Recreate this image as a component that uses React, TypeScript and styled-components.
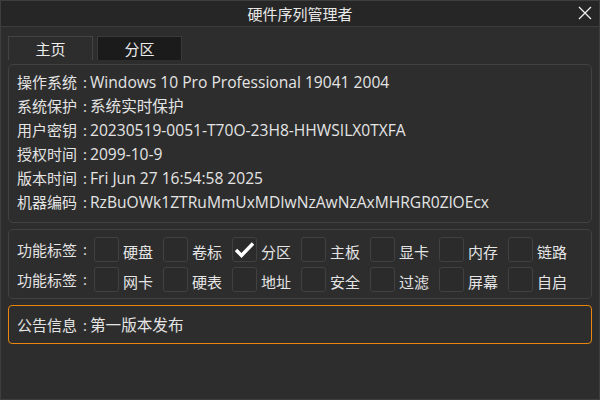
import styled, { createGlobalStyle } from 'styled-components'
import type { ReactElement } from 'react'

const GlobalStyle = createGlobalStyle`
  html, body {
    margin: 0;
    padding: 0;
    background: #2d2d2d;
  }
  body {
    font-family: "Open Sans", "Noto Sans CJK SC", sans-serif;
    color: #e4e4e4;
  }
`

type InfoRow = { label: string; value: string }

const INFO_ROWS: InfoRow[] = [
  { label: '操作系统', value: 'Windows 10 Pro Professional 19041 2004' },
  { label: '系统保护', value: '系统实时保护' },
  { label: '用户密钥', value: '20230519-0051-T70O-23H8-HHWSILX0TXFA' },
  { label: '授权时间', value: '2099-10-9' },
  { label: '版本时间', value: 'Fri Jun 27 16:54:58 2025' },
  { label: '机器编码', value: 'RzBuOWk1ZTRuMmUxMDIwNzAwNzAxMHRGR0ZlOEcx' },
]

type Feature = { name: string; checked?: boolean }

const FEATURE_ROWS: Feature[][] = [
  [
    { name: '硬盘' },
    { name: '卷标' },
    { name: '分区', checked: true },
    { name: '主板' },
    { name: '显卡' },
    { name: '内存' },
    { name: '链路' },
  ],
  [
    { name: '网卡' },
    { name: '硬表' },
    { name: '地址' },
    { name: '安全' },
    { name: '过滤' },
    { name: '屏幕' },
    { name: '自启' },
  ],
]

const App = (): ReactElement => {
  return (
    <>
      <GlobalStyle />
      <Window>
        <TitleBar>
          <Title>硬件序列管理者</Title>
          <CloseButton aria-label="close">
            <svg width="14" height="14" viewBox="0 0 14 14">
              <path d="M1 1 L13 13 M13 1 L1 13" stroke="#f0f0f0" strokeWidth="1.3" />
            </svg>
          </CloseButton>
        </TitleBar>
        <Body>
          <Tabs>
            <Tab>主页</Tab>
            <Tab active>分区</Tab>
          </Tabs>
          <InfoPanel>
            {INFO_ROWS.map(row => (
              <InfoLine key={row.label}>
                <Label>{row.label}</Label>
                <Colon>:</Colon>
                <Value>{row.value}</Value>
              </InfoLine>
            ))}
          </InfoPanel>
          <FeaturePanel>
            {FEATURE_ROWS.map((row, i) => (
              <FeatureLine key={i}>
                <FeatureLabel>
                  <Label>功能标签</Label>
                  <Colon>:</Colon>
                </FeatureLabel>
                {row.map(f => (
                  <FeatureItem key={f.name}>
                    <CheckBox>
                      {f.checked ? (
                        <svg width="21" height="17" viewBox="0 0 21 17">
                          <path
                            d="M2 9 L7.5 14.5 L19 2.5"
                            fill="none"
                            stroke="#ffffff"
                            strokeWidth="3.4"
                          />
                        </svg>
                      ) : null}
                    </CheckBox>
                    <FeatureName>{f.name}</FeatureName>
                  </FeatureItem>
                ))}
              </FeatureLine>
            ))}
          </FeaturePanel>
          <NoticePanel>
            <Label>公告信息</Label>
            <Colon>:</Colon>
            <Value>第一版本发布</Value>
          </NoticePanel>
        </Body>
      </Window>
    </>
  )
}

export default App

const Window = styled.div`
  width: 600px;
  height: 400px;
  box-sizing: border-box;
  border: 1px solid #3e3e3e;
  background: #2d2d2d;
  display: flex;
  flex-direction: column;
  font-size: 15px;
`

const TitleBar = styled.div`
  height: 25px;
  flex-shrink: 0;
  background: #262626;
  border-bottom: 1px solid #3c3c3c;
  display: flex;
  align-items: center;
  justify-content: center;
  position: relative;
`

const Title = styled.div`
  font-family: "Noto Sans CJK SC", sans-serif;
  font-size: 15px;
  color: #e8e8e8;
  line-height: 25px;
`

const CloseButton = styled.div`
  position: absolute;
  right: 7px;
  top: 5px;
  width: 14px;
  height: 14px;
  display: flex;
`

const Body = styled.div`
  padding: 9px 7px 0 7px;
  display: flex;
  flex-direction: column;
`

const Tabs = styled.div`
  display: flex;
  gap: 4px;
`

const Tab = styled.div<{ active?: boolean }>`
  width: 85px;
  height: 24px;
  box-sizing: border-box;
  border: 1px solid ${p => (p.active ? '#3a3a3a' : '#434343')};
  border-bottom: none;
  background: ${p => (p.active ? '#1b1b1b' : '#2d2d2d')};
  display: flex;
  align-items: center;
  justify-content: center;
  font-family: "Noto Sans CJK SC", sans-serif;
  font-size: 15px;
  color: #ececec;
`

const InfoPanel = styled.div`
  margin-top: 4px;
  height: 159px;
  box-sizing: border-box;
  border: 1px solid #414141;
  border-radius: 5px;
  padding: 5px 8px 0 8px;
  display: flex;
  flex-direction: column;
`

const InfoLine = styled.div`
  height: 24px;
  line-height: 24px;
  display: flex;
  white-space: nowrap;
`

const Label = styled.span`
  font-family: "Noto Sans CJK SC", sans-serif;
`

const Colon = styled.span`
  padding: 0 3px 0 6px;
`

const Value = styled.span`
  font-size: 15.6px;
`

const FeaturePanel = styled.div`
  margin-top: 6px;
  height: 70px;
  box-sizing: border-box;
  border: 1px solid #414141;
  border-radius: 5px;
  padding: 7px 8px 0 8px;
  display: flex;
  flex-direction: column;
  gap: 5px;
`

const FeatureLine = styled.div`
  display: flex;
  align-items: center;
  height: 25px;
`

const FeatureLabel = styled.div`
  width: 77px;
  display: flex;
  white-space: nowrap;
`

const FeatureItem = styled.div`
  width: 69px;
  display: flex;
  align-items: center;
  gap: 4px;
`

const CheckBox = styled.div`
  width: 25px;
  height: 25px;
  box-sizing: border-box;
  border: 1px solid #414141;
  border-radius: 3px;
  background: #2b2b2b;
  display: flex;
  align-items: center;
  justify-content: center;
`

const FeatureName = styled.span`
  font-family: "Noto Sans CJK SC", sans-serif;
  margin-top: 3px;
`

const NoticePanel = styled.div`
  margin-top: 6px;
  height: 39px;
  box-sizing: border-box;
  border: 1px solid #e8860f;
  border-radius: 4px;
  padding: 0 8px;
  display: flex;
  align-items: center;
  white-space: nowrap;
`
